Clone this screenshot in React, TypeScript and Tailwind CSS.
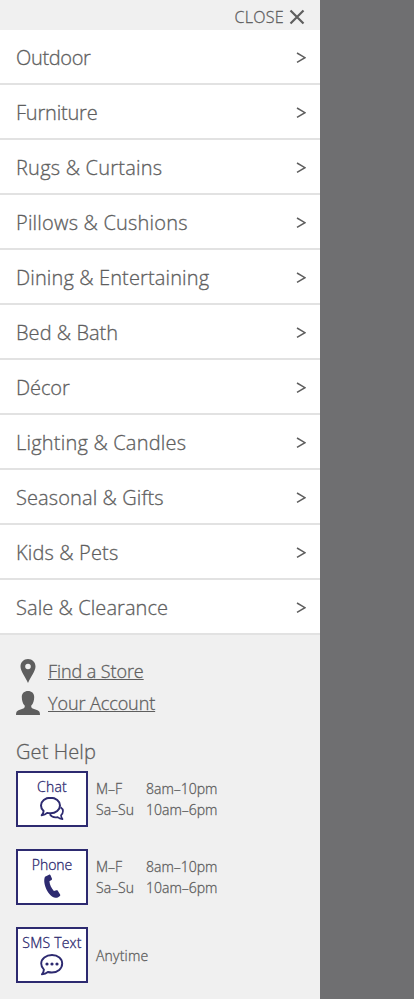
import React from "react";

const categories = [
  { label: "Outdoor", spacing: "tracking-[-0.35px]" },
  { label: "Furniture", spacing: "tracking-[-0.2px]" },
  { label: "Rugs & Curtains", spacing: "tracking-[0.22px]" },
  { label: "Pillows & Cushions", spacing: "tracking-[0.2px]" },
  { label: "Dining & Entertaining", spacing: "tracking-[0.13px]" },
  { label: "Bed & Bath", spacing: "tracking-[0.05px]" },
  { label: "Décor", spacing: "tracking-[-0.1px]" },
  { label: "Lighting & Candles", spacing: "tracking-[0.2px]" },
  { label: "Seasonal & Gifts", spacing: "tracking-[0.1px]" },
  { label: "Kids & Pets", spacing: "tracking-[0.15px]" },
  { label: "Sale & Clearance", spacing: "tracking-[0.08px]" },
];

function Chevron() {
  return (
    <svg className="mt-0.5" width="10" height="12" viewBox="0 0 10 12" fill="none" stroke="#5e5e5e" strokeWidth="1.500">
      <path d="M1 1 9 5.700 1 10.400" />
    </svg>
  );
}

function ChatIcon() {
  return (
    <svg width="24" height="24" viewBox="0 0 24 24" fill="none" stroke="#2d2a70" strokeWidth="2" strokeLinejoin="round">
      <path d="M10.500 1.800C5.200 1.800 1 5.200 1 9.500c0 2.300 1 4.200 2.600 5.500C3.500 16.600 2.900 18 1.700 19.200c2.300-.1 4.100-.9 5.500-2.300 1 .3 2.100.4 3.300.4 5.300 0 9.500-3.500 9.500-7.800s-4.200-7.700-9.500-7.700Z" />
      <path d="M20.600 11.200c1.500 1 2.400 2.300 2.400 3.900 0 1.700-.8 3.100-2 4.200.1 1.500.6 2.700 1.500 3.800-1.900-.1-3.600-.8-4.900-2-3.300.7-6.300-.4-7.800-2.800" strokeWidth="1.700" />
    </svg>
  );
}

function PhoneIcon() {
  return (
    <svg width="24" height="24" viewBox="0 0 24 24" fill="#2d2a70">
      <path d="M5 2.800 9 .7c.6-.3 1.100-.1 1.400.4l1.500 3.400c.3.700.1 1.100-.4 1.500L9.400 7.300c.4 3.700 2 7.100 4.500 9.700l2.500-.7c.6-.1 1 0 1.400.5l2.300 3.600c.4.600.3 1.100-.2 1.500-1.300 1.200-2.700 1.900-4.500 1.900C9 23.500 1.900 9.500 5 2.800Z" />
    </svg>
  );
}

function TextIcon() {
  return (
    <svg width="24" height="24" viewBox="0 0 24 24" fill="none" stroke="#2d2a70" strokeWidth="1.900">
      <path d="M12 3C6 3 1.200 6.600 1.200 11.600c0 2.500 1 4.400 2.700 6-.1 1.900-.8 3.400-2 4.800 2.400-.2 4.400-1 6-2.400 1.300.3 2.500.5 3.900.5 6 0 10.400-3.900 10.400-8.900S18 3 12 3Z" strokeLinejoin="round" />
      <g fill="#2d2a70" stroke="none">
        <circle cx="7" cy="12" r="1.600" />
        <circle cx="12" cy="12" r="1.600" />
        <circle cx="17" cy="12" r="1.600" />
      </g>
    </svg>
  );
}

function HelpButton({ label, spacing, children }: { label: string; spacing: string; children: React.ReactNode }) {
  return (
    <button className="flex h-14 w-[72px] shrink-0 flex-col items-center border-2 border-[#2d2a70] bg-white pt-1 text-[#2d2a70]">
      <span className={"h-[19px] whitespace-nowrap text-[14px] leading-[19px] " + spacing}>{label}</span>
      {children}
    </button>
  );
}

function Hours() {
  return (
    <div className="grid grid-cols-[50px_auto] content-start pt-[7px] text-[14px] leading-[21px]">
      <span>M–F</span>
      <span>8am–10pm</span>
      <span>Sa–Su</span>
      <span>10am–6pm</span>
    </div>
  );
}

export default function App() {
  return (
    <div className="flex h-[999px] w-[414px] overflow-hidden bg-[#6f6f71] font-['Open_Sans','Noto_Sans',sans-serif] font-light text-[#5e5e5e] [-webkit-text-stroke:0.3px_currentColor]">
      <div className="flex w-80 flex-col bg-[#f0f0f0]">
        <button className="flex h-[30px] items-center justify-end gap-[5px] pt-[3px] pr-[15px]">
          <span className="text-[16px] leading-6 tracking-[0.3px]">CLOSE</span>
          <svg width="16" height="16" viewBox="0 0 16 16" stroke="#5e5e5e" strokeWidth="2.200">
            <path d="M1.500 1.500 14.500 14.500M14.500 1.500 1.500 14.500" />
          </svg>
        </button>
        <nav>
          {categories.map((c) => (
            <a key={c.label} className="flex h-[55px] items-center justify-between border-b-2 border-[#e2e2e2] bg-white pr-[14px] pl-4">
              <span className={"pt-0.5 text-[20px] leading-7 " + c.spacing}>{c.label}</span>
              <Chevron />
            </a>
          ))}
        </nav>
        <div className="flex flex-col gap-2 px-4 pt-6">
          <a className="flex h-6 items-center gap-2">
            <svg width="24" height="24" viewBox="0 0 24 24" fill="#5e5e5e">
              <path fillRule="evenodd" d="M12 0C7.700 0 4.500 3.300 4.500 7.500 4.500 12 9 17.500 12 24c3-6.500 7.500-12 7.500-16.500C19.500 3.300 16.300 0 12 0Zm0 4.700a2.800 2.800 0 1 1 0 5.600 2.800 2.800 0 0 1 0-5.600Z" />
            </svg>
            <span className="text-[18px] leading-6 tracking-[-0.08px] underline decoration-1 underline-offset-1">Find a Store</span>
          </a>
          <a className="flex h-6 items-center gap-2">
            <svg width="24" height="24" viewBox="0 0 24 24" fill="#5e5e5e">
              <path d="M12 0C8.400 0 5.800 2.200 5.800 6c0 3.500.9 6.600 2.900 8.600.3 1.500-.1 2.400-1.400 2.900L2.500 19.200C.7 19.900 0 21.200 0 24h24c0-2.800-.7-4.100-2.500-4.800l-4.800-1.700c-1.300-.5-1.700-1.400-1.400-2.900 2-2 2.900-5.100 2.900-8.600C18.200 2.200 15.600 0 12 0Z" />
            </svg>
            <span className="text-[18px] leading-6 tracking-[-0.08px] underline decoration-1 underline-offset-1">Your Account</span>
          </a>
        </div>
        <h2 className="mt-[23px] h-[33px] px-4 text-[20px] leading-7 tracking-[0.1px]">Get Help</h2>
        <div className="flex flex-col gap-[22px] px-4">
          <div className="flex h-14 gap-2">
            <HelpButton label="Chat" spacing="tracking-[0.2px]"><ChatIcon /></HelpButton>
            <Hours />
          </div>
          <div className="flex h-14 gap-2">
            <HelpButton label="Phone" spacing="tracking-[0px]"><PhoneIcon /></HelpButton>
            <Hours />
          </div>
          <div className="flex h-14 items-center gap-2">
            <HelpButton label="SMS Text" spacing="tracking-[0.2px]"><TextIcon /></HelpButton>
            <span className="text-[14px] leading-[21px] tracking-[0.2px]">Anytime</span>
          </div>
        </div>
      </div>
    </div>
  );
}
